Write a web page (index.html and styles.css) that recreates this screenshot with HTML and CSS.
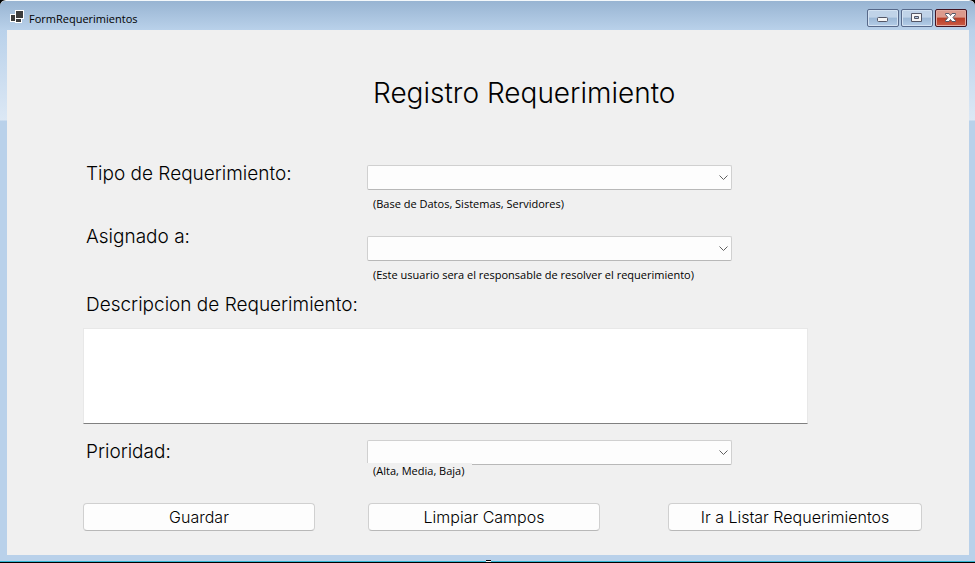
FILE: index.html
```html
<!DOCTYPE html>
<html lang="es">
<head>
<meta charset="utf-8">
<meta name="viewport" content="width=device-width, initial-scale=1">
<title>FormRequerimientos</title>
<link rel="stylesheet" href="styles.css">
</head>
<body>
<div class="window">
  <header class="titlebar">
    <svg class="app-icon" viewBox="0 0 14 13" aria-hidden="true">
      <path fill="#fff" d="M5 0h9v9h-2v4H5v-1H0V4h5z"/>
      <path fill="#3c3c3c" d="M6 1h7v7H6zM1 5h4v6H1zM6 9h5v3H6z"/>
    </svg>
    <span class="caption">FormRequerimientos</span>
    <div class="controls">
      <button class="control" type="button" aria-label="Minimizar">
        <svg viewBox="0 0 30 16" aria-hidden="true"><rect x="9.500" y="7.500" width="10" height="4" rx="1" fill="#f6f6f6" stroke="#535666"/></svg>
      </button>
      <button class="control" type="button" aria-label="Maximizar">
        <svg viewBox="0 0 30 16" aria-hidden="true"><path fill="#f6f6f6" fill-rule="evenodd" stroke="#535666" d="M9.500 3.500h10v8h-10zM12.500 6.500h4v2h-4z"/></svg>
      </button>
      <button class="control close" type="button" aria-label="Cerrar">
        <svg viewBox="0 0 30 16" aria-hidden="true"><path fill="#fff" stroke="#535666" d="M9.500 3.500h3.500l1.500 2 1.500-2h3.500v1l-2.500 3 2.500 3v1H16l-1.500-2-1.500 2H9.500v-1l2.500-3-2.500-3z"/></svg>
      </button>
    </div>
  </header>
  <form class="form">
    <div class="row heading">
      <h1>Registro Requerimiento</h1>
    </div>
    <div class="row type">
      <label for="tipo">Tipo de Requerimiento:</label>
      <div class="field">
        <select id="tipo" aria-describedby="tipo-hint"></select>
        <span class="hint" id="tipo-hint">(Base de Datos, Sistemas, Servidores)</span>
      </div>
    </div>
    <div class="row assigned">
      <label for="asignado">Asignado a:</label>
      <div class="field">
        <select id="asignado" aria-describedby="asignado-hint"></select>
        <span class="hint" id="asignado-hint">(Este usuario sera el responsable de resolver el requerimiento)</span>
      </div>
    </div>
    <div class="description">
      <label for="descripcion">Descripcion de Requerimiento:</label>
      <textarea id="descripcion"></textarea>
    </div>
    <div class="row priority">
      <label for="prioridad">Prioridad:</label>
      <div class="field">
        <select id="prioridad" aria-describedby="prioridad-hint"></select>
        <span class="hint" id="prioridad-hint">(Alta, Media, Baja)</span>
      </div>
    </div>
    <div class="actions">
      <button class="action save" type="button">Guardar</button>
      <button class="action clear" type="button">Limpiar Campos</button>
      <button class="action list" type="button">Ir a Listar Requerimientos</button>
    </div>
  </form>
</div>
</body>
</html>
```
FILE: styles.css
```css
* {
  box-sizing: border-box;
}

body {
  margin: 0;
  background: #000;
  color: #000;
  font-family: "Segoe UI", "Open Sans", sans-serif;
  font-size: 12px;
}

.window {
  position: relative;
  display: flex;
  flex-direction: column;
  min-height: calc(100vh - 1px);
  padding: 0 6px 6px 7px;
  border-top: 1px solid #f4f8fb;
  border-bottom: 1px solid #34b6d3;
  border-radius: 6px 6px 0 0;
  background:
    linear-gradient(#99b4d1, #b9d1ea 29px, #dce8f5 119px, #b9d1ea 120px);
}

/* Resize grip on the lower edge */
.window::after {
  content: "";
  position: absolute;
  bottom: -2px;
  left: calc(50% - 2px);
  width: 5px;
  height: 2px;
  border-top: 1px solid #000;
  background: #fff;
}

.titlebar {
  display: flex;
  align-items: center;
  height: 29px;
  margin: 0 -6px 0 -7px;
  padding: 2px 8px 0 10px;
  border-radius: 6px 6px 0 0;
  background: linear-gradient(#98b4d2, #b9d1ea);
}

.app-icon {
  width: 14px;
  height: 13px;
}

.caption {
  margin: 5px 0 0 5px;
  font-size: 11px;
  line-height: 16px;
  white-space: nowrap;
}

.controls {
  display: flex;
  gap: 2px;
  margin: 3px 0 0 auto;
}

.control {
  width: 32px;
  height: 18px;
  padding: 0;
  border: 1px solid #57698a;
  border-radius: 2px;
  background: linear-gradient(#c0d3e8 45%, #9bb7d5 50%, #b4cde8);
  box-shadow: inset 0 0 0 1px #d3e2f2;
}

.control svg {
  display: block;
  width: 30px;
  height: 16px;
}

.control.close {
  border-color: #431422;
  background: linear-gradient(#dc9a8d 45%, #b83c26 50%, #cb5b45);
  box-shadow: inset 0 0 0 1px #e3aaa0;
}

.form {
  flex: 1;
  padding: 44px 47px 24px 76px;
  background: #f0f0f0;
}

.row {
  display: grid;
  grid-template-columns: 284fr 365fr 190fr;
}

label,
h1,
.action {
  font-family: "Century Gothic", Inter, sans-serif;
  font-weight: 300;
}

label {
  padding-left: 3px;
  font-size: 19px;
  line-height: 26px;
  white-space: nowrap;
}

h1 {
  grid-column: 2;
  margin: 0;
  padding-left: 6px;
  font-size: 28px;
  line-height: 38px;
  white-space: nowrap;
}

.field {
  display: flex;
  flex-direction: column;
  align-items: flex-start;
  gap: 6px;
}

select {
  appearance: none;
  width: 100%;
  height: 25px;
  padding: 0 24px 0 6px;
  border: 1px solid #d0d0d0;
  border-bottom-color: #b8b8b8;
  border-radius: 2px;
  background: #fdfdfd url("data:image/svg+xml,%3Csvg xmlns='http://www.w3.org/2000/svg' width='9' height='6'%3E%3Cpath d='M.5.5l4 4 4-4' fill='none' stroke='%23606060'/%3E%3C/svg%3E") no-repeat right 3px center;
  font: inherit;
}

.hint {
  padding: 0 8px 0 6px;
  font-size: 11px;
  line-height: 16px;
  background: #f0f0f0;
  white-space: nowrap;
}

.type {
  margin-top: 49px;
}

.type .field {
  padding-top: 4px;
}

.assigned {
  margin-top: 12px;
}

.assigned .field {
  padding-top: 12px;
}

.description {
  display: grid;
  grid-template-columns: 725fr 114fr;
  row-gap: 10px;
  margin-top: 9px;
}

.description label {
  grid-column: 1 / -1;
}

textarea {
  height: 96px;
  padding: 4px;
  border: 1px solid #e8e8e8;
  border-bottom-color: #808080;
  border-radius: 0;
  background: #fff;
  font: inherit;
  resize: none;
}

.priority {
  margin-top: 15px;
}

.priority .field {
  gap: 0;
  padding-top: 1px;
}

/* The caption sits over the lower edge of the list box */
.priority .hint {
  z-index: 1;
  margin-top: -2px;
}

.actions {
  display: grid;
  grid-template-columns: 232fr 53fr 232fr 68fr 254fr;
  margin-top: 24px;
}

.action {
  height: 28px;
  padding: 0;
  border: 1px solid #d0d0d0;
  border-bottom-color: #b8b8b8;
  border-radius: 4px;
  background: #fdfdfd;
  color: #000;
  font-size: 16px;
  line-height: 24px;
  white-space: nowrap;
}

.clear {
  grid-column: 3;
}

.list {
  grid-column: 5;
}
```
